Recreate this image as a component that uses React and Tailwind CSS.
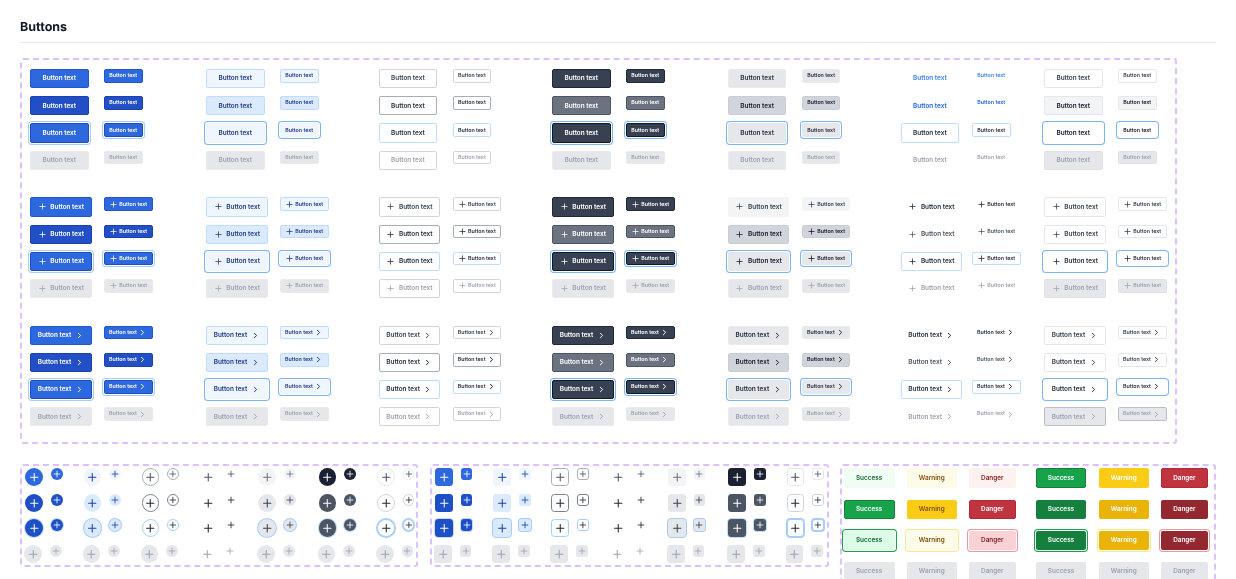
import { Plus, ChevronRight } from "lucide-react";

const disabled = "bg-[#e5e7eb] border-[#e8eaed] text-[#9ca3af]";
const ringBlue = "shadow-[0_0_0_1px_#fff,0_0_0_2px_#7ab4f8]";
const ringSoft = "shadow-[0_0_0_1px_#fff,0_0_0_2px_#a5cdfb]";

const primary = [
  "bg-[#2d68de] border-[#1d56cf] text-white",
  "bg-[#224fc6] border-[#1a43ad] text-white",
  `bg-[#2d68de] border-[#1d4ec0] text-white ${ringSoft}`,
  disabled,
];
const soft = [
  "bg-[#eff6ff] border-[#bfdbfe] text-[#1e3a8a]",
  "bg-[#dbeafe] border-[#bfdbfe] text-[#1e3a8a]",
  `bg-[#eff6ff] border-[#eff6ff] text-[#1e3a8a] ${ringBlue}`,
  disabled,
];
const outline = [
  "bg-white border-[#d1d5db] text-[#374151]",
  "bg-white border-[#a8adb6] text-[#1f2937]",
  "bg-white border-[#bfdbfe] text-[#1f2937]",
  "bg-white border-[#d1d5db] text-[#9ca3af]",
];
const dark = [
  "bg-[#374151] border-[#1f2937] text-white",
  "bg-[#6b7280] border-[#4b5563] text-white",
  `bg-[#374151] border-[#111827] text-white ${ringBlue}`,
  disabled,
];
const gray = [
  "bg-[#e5e7eb] border-[#e8eaed] text-[#1f2937]",
  "bg-[#d1d5db] border-[#c9ced6] text-[#111827]",
  `bg-[#e5e7eb] border-[#e5e7eb] text-[#1f2937] ${ringBlue}`,
  disabled,
];
const grayLight = [
  "bg-[#f3f4f6] border-[#f3f4f6] text-[#374151]",
  "bg-[#d1d5db] border-[#c9ced6] text-[#111827]",
  `bg-[#e5e7eb] border-[#e5e7eb] text-[#111827] ${ringBlue}`,
  disabled,
];
const ghostBlue = [
  "bg-transparent border-transparent text-[#3b82f6]",
  "bg-transparent border-transparent text-[#2563eb]",
  "bg-white border-[#bfdbfe] text-[#1f2937]",
  "bg-transparent border-transparent text-[#9ca3af]",
];
const ghost = [
  "bg-transparent border-transparent text-[#1f2937]",
  "bg-transparent border-transparent text-[#4b5563]",
  "bg-white border-[#bfdbfe] text-[#1f2937]",
  "bg-transparent border-transparent text-[#9ca3af]",
];
const whiteTop = [
  "bg-white border-[#e5e7eb] text-[#374151]",
  "bg-[#f3f4f6] border-[#e5e7eb] text-[#111827]",
  `bg-white border-white text-[#111827] ${ringBlue}`,
  "bg-[#e5e7eb] border-[#dfe1e6] text-[#9ca3af]",
];
const white = [
  "bg-white border-[#e5e7eb] text-[#374151]",
  "bg-white border-[#e5e7eb] text-[#374151]",
  `bg-white border-white text-[#1f2937] ${ringBlue}`,
  "bg-[#e5e7eb] border-[#dfe1e6] text-[#9ca3af]",
];
const whiteBottom = [
  "bg-white border-[#e5e7eb] text-[#374151]",
  "bg-white border-[#e5e7eb] text-[#374151]",
  `bg-white border-white text-[#1f2937] ${ringBlue}`,
  "bg-[#e5e7eb] border-[#b9bdc5] text-[#9ca3af]",
];

const sections = [
  { kind: "text", groups: [primary, soft, outline, dark, gray, ghostBlue, whiteTop] },
  { kind: "plus", groups: [primary, soft, outline, dark, grayLight, ghost, white] },
  { kind: "chevron", groups: [primary, soft, outline, dark, gray, ghost, whiteBottom] },
];

function Btn({ kind, small, cls }) {
  const size = small
    ? `h-[13.7px] text-[5.3px] ${kind === "text" ? "w-[38.6px]" : "w-[48.6px]"}`
    : `h-[19.2px] text-[6.4px] ${kind === "text" ? "w-[58.6px]" : "w-[61.6px]"}`;
  return (
    <button
      className={`flex items-center justify-center rounded-[2px] border font-semibold leading-none ${size} ${cls}`}
    >
      {kind === "plus" && (
        <Plus size={9} className={small ? "mr-[1px]" : "mr-[3.7px]"} />
      )}
      Button text
      {kind === "chevron" && (
        <ChevronRight size={9} strokeWidth={2.6} className={small ? "ml-[1.5px]" : "ml-[3.5px]"} />
      )}
    </button>
  );
}

function ButtonSection({ kind, groups }) {
  return (
    <div className="grid grid-cols-[176px_172.6px_173.4px_175.8px_172.8px_143.4px_1fr]">
      {groups.map((rows, g) => (
        <div
          key={g}
          className={`grid items-start gap-y-[8px] ${
            g === 5 ? "grid-cols-[71.4px_1fr]" : "grid-cols-[74px_1fr]"
          }`}
        >
          {rows.map((cls, r) => [
            <Btn key={`l${r}`} kind={kind} cls={cls} />,
            <Btn key={`s${r}`} kind={kind} small cls={cls} />,
          ])}
        </div>
      ))}
    </div>
  );
}

const iconGroups = [
  [
    "bg-[#2d68de] text-white",
    "bg-[#1d4fc7] text-white",
    "bg-[#1d4fc7] text-white shadow-[0_0_0_1px_#bfdbfe]",
    "bg-[#e5e7eb] text-[#9ca3af]",
  ],
  [
    "bg-[#eff6ff] text-[#1e40af]",
    "bg-[#dbeafe] text-[#1e40af]",
    "bg-[#dbeafe] text-[#1e40af] shadow-[0_0_0_1px_#a5cdfb]",
    "bg-[#e5e7eb] text-[#9ca3af]",
  ],
  [
    "bg-white border border-[#a8adb6] text-[#4b5563]",
    "bg-white border border-[#7c828d] text-[#1f2937]",
    "bg-white border border-[#a5cdfb] text-[#1f2937]",
    "bg-[#e5e7eb] text-[#9ca3af]",
  ],
  ["text-[#4b5563]", "text-[#1f2937]", "text-[#1f2937]", "text-[#9ca3af]"],
  [
    "bg-[#f3f4f6] text-[#6b7280]",
    "bg-[#e5e7eb] text-[#374151]",
    "bg-[#e5e7eb] text-[#374151] shadow-[0_0_0_1px_#a5cdfb]",
    "bg-[#e5e7eb] text-[#9ca3af]",
  ],
  [
    "bg-[#1b2033] text-white",
    "bg-[#4b5563] text-white",
    "bg-[#4b5563] text-white shadow-[0_0_0_1px_#bfdbfe]",
    "bg-[#e5e7eb] text-[#9ca3af]",
  ],
  [
    "bg-white border border-[#e5e7eb] text-[#4b5563]",
    "bg-white border border-[#d1d5db] text-[#1f2937]",
    "bg-white border border-[#a5cdfb] text-[#1f2937] shadow-[0_0_0_1px_#a5cdfb]",
    "bg-[#e5e7eb] text-[#9ca3af]",
  ],
];

function IconBtn({ small, round, cls, off }) {
  const size = small ? "w-[11.7px] h-[11.7px]" : "w-[17.7px] h-[17.7px]";
  const shape = round ? "rounded-full" : small ? "rounded-[3px]" : "rounded-[3.5px]";
  return (
    <button
      className={`flex items-center justify-center ${size} ${shape} ${cls} ${off ? "-ml-px" : ""}`}
    >
      <Plus size={small ? 10 : 12.5} />
    </button>
  );
}

const dashed = "rounded-[3px] border-2 border-dashed border-[#dcc0ff]";

function IconPanel({ round, className }) {
  return (
    <div
      className={`grid h-[103px] content-start grid-cols-[58.3px_58px_58.2px_58.4px_60.3px_58.4px_1fr] pl-[3.4px] pt-[2.4px] ${dashed} ${className}`}
    >
      {iconGroups.map((rows, g) => (
        <div key={g} className="grid grid-cols-[25.7px_1fr] content-start items-start gap-y-[7.9px]">
          {rows.map((cls, r) => [
            <IconBtn key={`l${r}`} round={round} cls={cls} off={r === 3} />,
            <IconBtn key={`s${r}`} round={round} small cls={cls} off={r === 3} />,
          ])}
        </div>
      ))}
    </div>
  );
}

const statusLeft = [
  ["bg-[#f0fdf4] text-[#166534]", "bg-[#fefce8] text-[#854d0e]", "bg-[#fdf2f0] text-[#7f1d1d]"],
  [
    "bg-[#16a34a] border border-[#15803d] text-white",
    "bg-[#facc15] border border-[#facc15] text-[#854d0e]",
    "bg-[#c0343f] border border-[#b02a35] text-white",
  ],
  [
    "bg-[#dcfce7] text-[#166534] shadow-[0_0_0_1px_#fff,0_0_0_2px_#16a34a]",
    "bg-[#fefce8] text-[#854d0e] shadow-[0_0_0_1px_#fff,0_0_0_2px_#fde68a]",
    "bg-[#f8d2d5] text-[#7f1d1d] shadow-[0_0_0_1px_#fff,0_0_0_2px_#e8989f]",
  ],
  [disabled, disabled, disabled],
];

const statusRight = [
  [
    "bg-[#16a34a] border border-[#15803d] text-white",
    "bg-[#facc15] text-white",
    "bg-[#c0343f] border border-[#b02a35] text-white",
  ],
  ["bg-[#15803d] text-white", "bg-[#eab308] text-white", "bg-[#932830] text-white"],
  [
    "bg-[#15803d] text-white shadow-[0_0_0_1px_#fff,0_0_0_2px_#16a34a]",
    "bg-[#eab308] text-white shadow-[0_0_0_1px_#fff,0_0_0_2px_#fde68a]",
    "bg-[#932830] text-white shadow-[0_0_0_1px_#fff,0_0_0_2px_#e8989f]",
  ],
  [disabled, disabled, disabled],
];

const statusLabels = ["Success", "Warning", "Danger"];

function StatusGroup({ rows, right }) {
  return (
    <div
      className={`grid content-start gap-x-[12.2px] gap-y-[12px] ${
        right ? "grid-cols-[50.7px_50.3px_46.7px]" : "grid-cols-[51px_50px_46.7px]"
      }`}
    >
      {rows.map((row, r) =>
        row.map((cls, c) => (
          <button
            key={`${r}${c}`}
            className={`flex h-[19.2px] items-center justify-center rounded-[2px] text-[6.4px] font-semibold leading-none ${cls}`}
          >
            {statusLabels[c]}
          </button>
        ))
      )}
    </div>
  );
}

export default function App() {
  return (
    <div className="h-[579px] w-[1236px] overflow-hidden px-[20px] font-[family-name:Inter,sans-serif] will-change-transform [text-rendering:geometricPrecision]">
      <div className="border-b border-[#e5e7eb] pb-[6px] pt-[20px]">
        <h1 className="text-[12.5px] font-bold leading-[16px] text-[#111827]">Buttons</h1>
      </div>

      <div className={`mt-[15px] flex w-[1157px] flex-col gap-y-[27.6px] pb-[16px] pl-[8px] pt-[9px] ${dashed}`}>
        {sections.map((s) => (
          <ButtonSection key={s.kind} kind={s.kind} groups={s.groups} />
        ))}
      </div>

      <div className="mt-[19.5px] flex items-start">
        <IconPanel round className="w-[398.6px]" />
        <IconPanel className="ml-[11.4px] w-[399.3px]" />
        <div className={`ml-[11px] flex h-[130px] w-[376.7px] items-start gap-x-[20px] pl-[2px] pt-[2.4px] ${dashed}`}>
          <StatusGroup rows={statusLeft} />
          <StatusGroup rows={statusRight} right />
        </div>
      </div>
    </div>
  );
}
